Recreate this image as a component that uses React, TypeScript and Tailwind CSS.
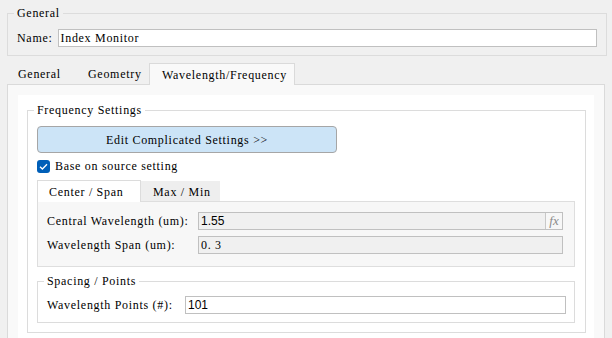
import React from "react";

const Legend = ({ children }: { children: React.ReactNode }) => (
  <legend className="-ml-[3px] h-[14px] px-[3px] leading-[14px]">{children}</legend>
);

type BoxProps = {
  children: React.ReactNode;
  bg?: string;
  fx?: boolean;
  sans?: boolean;
  className?: string;
};

const TextBox = ({ children, bg = "bg-white", fx, sans, className = "" }: BoxProps) => (
  <div className={`flex h-[18px] items-center border border-[#c0c0c0] ${bg} ${className}`}>
    <span
      className={
        sans
          ? "flex-1 pl-[2px] [font-family:'Liberation_Sans',sans-serif] text-[12px] tracking-normal"
          : "flex-1 pl-[2px]"
      }
    >
      {children}
    </span>
    {fx && (
      <span className="flex h-full w-[17px] items-center justify-center border-l border-[#c8c8c8] bg-[#f7f7f7] [font-family:'Liberation_Serif',serif] text-[13px] italic tracking-normal text-[#8a8a8a]">
        fx
      </span>
    )}
  </div>
);

const App = () => {
  return (
    <div className="h-[338px] w-[612px] overflow-hidden bg-[#f0f0f0] pt-[6px] [font-family:'Liberation_Serif',serif] text-[12px] leading-[14px] tracking-[0.7px] text-black">
      <fieldset className="ml-[7px] w-[600px] border border-[#dcdcdc] px-[9px] pt-[9px] pb-[8px]">
        <Legend>General</Legend>
        <div className="flex items-center gap-[5px]">
          <span className="whitespace-nowrap">Name:</span>
          <TextBox className="flex-1">Index Monitor</TextBox>
        </div>
      </fieldset>

      {/* tabs */}
      <div className="mt-[7px] ml-[7px] flex h-[21px] items-end">
        <div className="h-[21px] w-[70px] pt-[4px] pl-[11px]">General</div>
        <div className="h-[21px] w-[72px] pt-[4px] pl-[11px]">Geometry</div>
        <div className="relative z-10 -mb-px h-[22px] w-[146px] border border-b-0 border-[#dadada] bg-[#f9f9f9] pt-[4px] pl-[12px]">
          Wavelength/Frequency
        </div>
      </div>

      <div className="ml-[7px] h-[300px] w-[598px] border border-[#dadada] bg-[#f9f9f9] px-[10px] pt-[10px]">
        <div className="h-full bg-white px-[9px] pt-[8px]">
          <fieldset className="w-[558px] border border-[#dcdcdc] pt-[9px] pr-[10px] pb-[9px] pl-[9px]">
            <Legend>Frequency Settings</Legend>

            <button
              type="button"
              className="flex h-[27px] w-[300px] items-center justify-center rounded-[4px] border border-[#a6a6a6] bg-[#cce4f7]"
            >
              Edit Complicated Settings &gt;&gt;
            </button>

            <div className="mt-[6px] flex h-[14px] items-center gap-[5px]">
              <svg width="13" height="13" viewBox="0 0 13 13">
                <rect width="13" height="13" rx="3" fill="#005fb8" />
                <path d="M3 6.7 L5.4 9 L10 4.2" fill="none" stroke="#fff" strokeWidth="1.3" />
              </svg>
              <span>Base on source setting</span>
            </div>

            <div className="mt-[7px] flex h-[21px] items-end">
              <div className="relative z-10 -mb-px h-[22px] w-[104px] border border-b-0 border-[#dcdcdc] bg-white pt-[4px] pl-[11px]">
                Center / Span
              </div>
              <div className="h-[20px] w-[79px] bg-[#eeeeee] pt-[4px] pl-[12px]">Max / Min</div>
            </div>

            <div className="border border-[#dedede] bg-[#f7f7f7] pt-[10px] pr-[11px] pb-[12px] pl-[9px]">
              <div className="grid grid-cols-[151px_1fr] items-center gap-y-[6px]">
                <span>Central Wavelength (um):</span>
                <TextBox bg="bg-[#f0f0f0]" fx sans>
                  1.55
                </TextBox>
                <span>Wavelength Span (um):</span>
                <TextBox bg="bg-[#f0f0f0]">0. 3</TextBox>
              </div>
            </div>

            <fieldset className="mt-[7px] w-[538px] border border-[#dcdcdc] pt-[8px] pr-[8px] pb-[8px] pl-[9px]">
              <Legend>Spacing / Points</Legend>
              <div className="flex items-center">
                <span className="w-[138px]">Wavelength Points (#):</span>
                <TextBox className="flex-1" sans>
                  101
                </TextBox>
              </div>
            </fieldset>
          </fieldset>
        </div>
      </div>
    </div>
  );
};

export default App;
